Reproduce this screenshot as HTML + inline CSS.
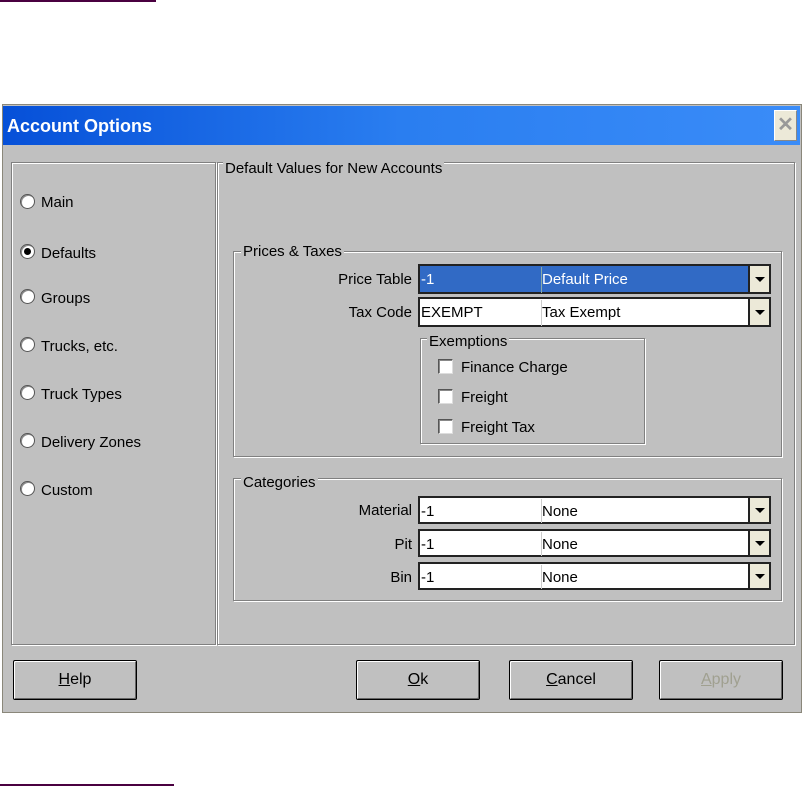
<!DOCTYPE html>
<html><head><style>
body{margin:0;width:806px;height:787px;background:#fff;position:relative;overflow:hidden;font-family:"Liberation Sans",Arial,sans-serif;font-size:15px;color:#000}
.a{position:absolute}
.win{left:2px;top:104px;width:800px;height:609px;background:#c0c0c0;border:1px solid #8a877a;box-sizing:border-box}
.title{left:3px;top:106px;width:797px;height:39px;background:linear-gradient(90deg,#0650d8,#2a7ef0 50%,#3a8cf8);color:#fff;font-weight:bold;font-size:18px;line-height:40px;padding-left:4px;box-sizing:border-box}
.close{left:774px;top:110px;width:23px;height:31px;background:#ece9d8;border:1px solid #fff;border-right-color:#888;border-bottom-color:#888;box-sizing:border-box;color:#999;font-weight:bold;font-size:20px;text-align:center;line-height:29px}
.etch{border:1px solid #808080;box-shadow:inset 1px 1px 0 #fff,1px 1px 0 #fff;box-sizing:border-box}
.lbl{background:#c0c0c0;padding:0 2px;line-height:16px}
.radio{width:15px;height:15px;border-radius:50%;background:#fff;border:1px solid #555;box-shadow:inset 1px 1px 0 #888;box-sizing:border-box}
.radio.on::after{content:"";position:absolute;left:3px;top:3px;width:7px;height:7px;border-radius:50%;background:#000}
.combo{background:#fff;border:2px solid #222;box-sizing:border-box;height:30px}
.combo .c1{position:absolute;left:0;top:1px;width:120px;height:100%;border-right:1px solid #ccc;padding-left:1px;line-height:26px}
.combo .c2{position:absolute;left:122px;top:1px;line-height:26px}
.combo .dd{position:absolute;right:0;top:0;width:21px;height:100%;background:#ece9d8;border-left:2px solid #222;box-sizing:border-box}
.dd::after{content:"";position:absolute;left:5px;top:50%;margin-top:-2px;border-left:5px solid transparent;border-right:5px solid transparent;border-top:5px solid #000}
.cb{width:15px;height:15px;background:#fff;border:1px solid #555;border-right-color:#ddd;border-bottom-color:#ddd;box-sizing:border-box;box-shadow:inset 1px 1px 0 #888}
.btn{height:40px;width:124px;border:1px solid #000;border-radius:2px;box-sizing:border-box;box-shadow:inset 1px 1px 0 #fff,inset -1px -1px 0 #666;text-align:center;line-height:38px;font-size:16px}
.t{margin-top:1px}
</style></head><body>
<div class="a" style="left:0;top:0;width:156px;height:2px;background:#4a0040"></div>
<div class="a" style="left:0;top:784px;width:174px;height:2px;background:#4a0040"></div>
<div class="a win"></div>
<div class="a title">Account Options</div>
<div class="a close">✕</div>

<div class="a etch" style="left:11px;top:162px;width:205px;height:483px"></div>
<div class="a etch" style="left:217px;top:162px;width:578px;height:483px"></div>
<div class="a lbl" style="left:223px;top:161px">Default Values for New Accounts</div>

<div class="a radio" style="left:20px;top:194px"></div><div class="a" style="left:41px;top:194px">Main</div>
<div class="a radio on" style="left:20px;top:244px"></div><div class="a" style="left:41px;top:245px">Defaults</div>
<div class="a radio" style="left:20px;top:289px"></div><div class="a" style="left:41px;top:290px">Groups</div>
<div class="a radio" style="left:20px;top:337px"></div><div class="a" style="left:41px;top:338px">Trucks, etc.</div>
<div class="a radio" style="left:20px;top:385px"></div><div class="a" style="left:41px;top:386px">Truck Types</div>
<div class="a radio" style="left:20px;top:433px"></div><div class="a" style="left:41px;top:434px">Delivery Zones</div>
<div class="a radio" style="left:20px;top:481px"></div><div class="a" style="left:41px;top:482px">Custom</div>

<div class="a etch" style="left:233px;top:251px;width:549px;height:206px"></div>
<div class="a lbl" style="left:241px;top:244px">Prices &amp; Taxes</div>
<div class="a" style="left:300px;top:271px;width:112px;text-align:right">Price Table</div>
<div class="a combo" style="left:418px;top:264px;width:353px;background:#316ac5;color:#fff"><div class="c1" style="border-color:#8aa">-1</div><div class="c2">Default Price</div><div class="dd" style="color:#000"></div></div>
<div class="a" style="left:300px;top:304px;width:112px;text-align:right">Tax Code</div>
<div class="a combo" style="left:418px;top:297px;width:353px"><div class="c1">EXEMPT</div><div class="c2">Tax Exempt</div><div class="dd"></div></div>

<div class="a etch" style="left:420px;top:338px;width:225px;height:106px"></div>
<div class="a lbl" style="left:427px;top:334px">Exemptions</div>
<div class="a cb" style="left:438px;top:359px"></div><div class="a" style="left:461px;top:359px">Finance Charge</div>
<div class="a cb" style="left:438px;top:389px"></div><div class="a" style="left:461px;top:389px">Freight</div>
<div class="a cb" style="left:438px;top:419px"></div><div class="a" style="left:461px;top:419px">Freight Tax</div>

<div class="a etch" style="left:233px;top:478px;width:549px;height:123px"></div>
<div class="a lbl" style="left:241px;top:475px">Categories</div>
<div class="a" style="left:300px;top:502px;width:112px;text-align:right">Material</div>
<div class="a combo" style="left:418px;top:496px;width:353px;height:28px"><div class="c1" style="line-height:25px">-1</div><div class="c2" style="line-height:25px">None</div><div class="dd"></div></div>
<div class="a" style="left:300px;top:536px;width:112px;text-align:right">Pit</div>
<div class="a combo" style="left:418px;top:529px;width:353px;height:28px"><div class="c1" style="line-height:25px">-1</div><div class="c2" style="line-height:25px">None</div><div class="dd"></div></div>
<div class="a" style="left:300px;top:569px;width:112px;text-align:right">Bin</div>
<div class="a combo" style="left:418px;top:562px;width:353px;height:28px"><div class="c1" style="line-height:25px">-1</div><div class="c2" style="line-height:25px">None</div><div class="dd"></div></div>

<div class="a btn" style="left:13px;top:660px"><u>H</u>elp</div>
<div class="a btn" style="left:356px;top:660px"><u>O</u>k</div>
<div class="a btn" style="left:509px;top:660px"><u>C</u>ancel</div>
<div class="a btn" style="left:659px;top:660px;color:#a0a090"><u>A</u>pply</div>
</body></html>
